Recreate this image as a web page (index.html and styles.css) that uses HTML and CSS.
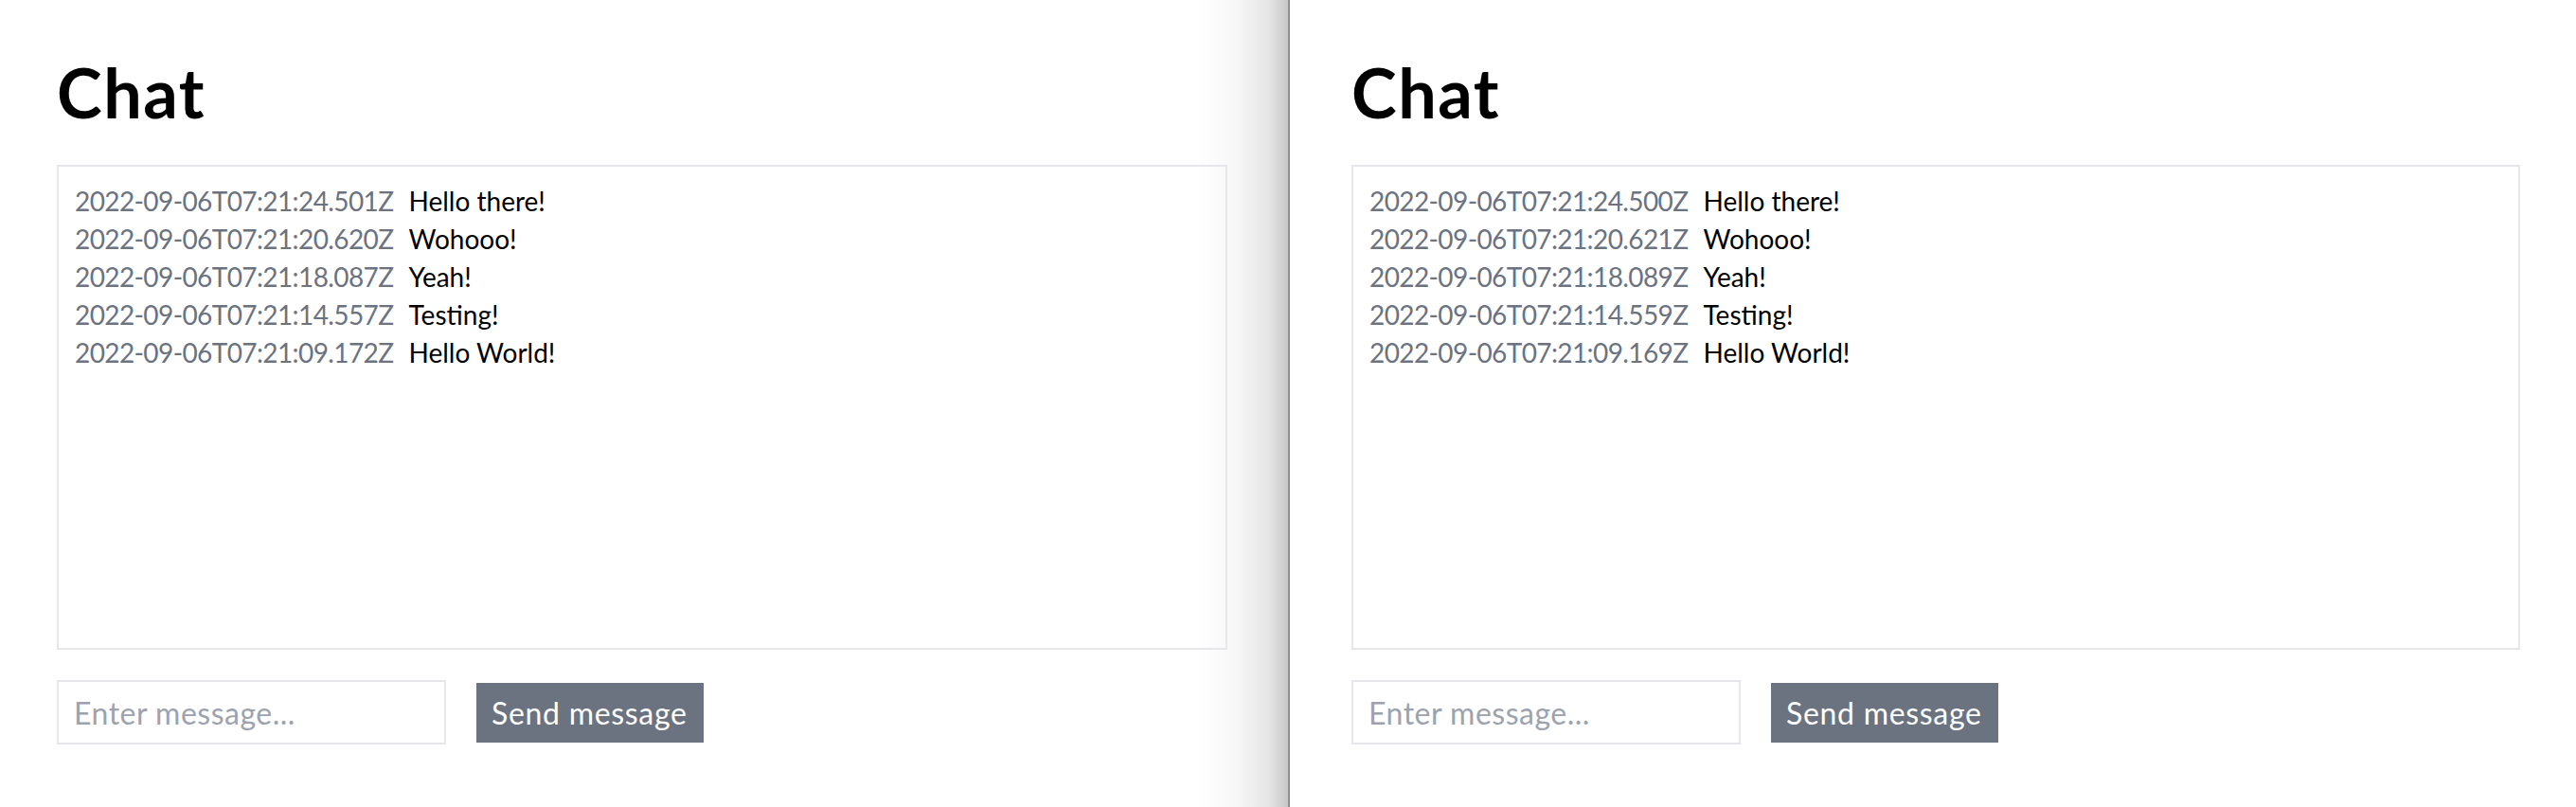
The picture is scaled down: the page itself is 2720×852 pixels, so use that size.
FILE: index.html
```html
<!DOCTYPE html>
<html lang="en">
<head>
<meta charset="utf-8">
<title>Chat</title>
<link rel="stylesheet" href="styles.css">
</head>
<body>
<div class="screen">
  <section class="pane pane-left">
    <h1 class="title">Chat</h1>
    <div class="messages">
      <div class="row"><span class="time">2022-09-06T07:21:24.501Z</span><span class="text">Hello there!</span></div>
      <div class="row"><span class="time">2022-09-06T07:21:20.620Z</span><span class="text">Wohooo!</span></div>
      <div class="row"><span class="time">2022-09-06T07:21:18.087Z</span><span class="text">Yeah!</span></div>
      <div class="row"><span class="time">2022-09-06T07:21:14.557Z</span><span class="text">Testing!</span></div>
      <div class="row"><span class="time">2022-09-06T07:21:09.172Z</span><span class="text">Hello World!</span></div>
    </div>
    <form class="composer">
      <input class="field" type="text" placeholder="Enter message...">
      <button class="send" type="button">Send message</button>
    </form>
  </section>
  <div class="divider"></div>
  <section class="pane pane-right">
    <h1 class="title">Chat</h1>
    <div class="messages">
      <div class="row"><span class="time">2022-09-06T07:21:24.500Z</span><span class="text">Hello there!</span></div>
      <div class="row"><span class="time">2022-09-06T07:21:20.621Z</span><span class="text">Wohooo!</span></div>
      <div class="row"><span class="time">2022-09-06T07:21:18.089Z</span><span class="text">Yeah!</span></div>
      <div class="row"><span class="time">2022-09-06T07:21:14.559Z</span><span class="text">Testing!</span></div>
      <div class="row"><span class="time">2022-09-06T07:21:09.169Z</span><span class="text">Hello World!</span></div>
    </div>
    <form class="composer">
      <input class="field" type="text" placeholder="Enter message...">
      <button class="send" type="button">Send message</button>
    </form>
  </section>
</div>
</body>
</html>
```

FILE: styles.css
```css
* { box-sizing: border-box; }

html, body {
  margin: 0;
  padding: 0;
  background: #ffffff;
}

body {
  font-family: Lato, "Noto Sans", sans-serif;
  color: #000000;
}

.screen {
  display: flex;
  width: 2720px;
  height: 852px;
  overflow: hidden;
}

.pane {
  display: flex;
  flex-direction: column;
  padding-top: 57px;
}

.pane-left {
  width: 1360px;
  flex: none;
  padding-left: 60px;
  padding-right: 64px;
  background: linear-gradient(to right,
    rgba(0,0,0,0) calc(100% - 100px),
    rgba(0,0,0,0.03) calc(100% - 55px),
    rgba(0,0,0,0.10) calc(100% - 20px),
    rgba(0,0,0,0.22) 100%);
}

.divider {
  width: 2px;
  flex: none;
  background: #8e8e8e;
}

.pane-right {
  flex: 1;
  padding-left: 65px;
  padding-right: 59px;
}

.title {
  margin: 0 0 37px;
  font-size: 72px;
  line-height: 80px;
  font-weight: 700;
  letter-spacing: 1.5px;
}

.messages {
  height: 512px;
  border: 2px solid #e5e7eb;
  padding: 16px 16px 16px 17px;
}

.row {
  font-size: 28px;
  line-height: 40px;
  white-space: nowrap;
}

.time {
  color: #6b7280;
  margin-right: 16px;
  letter-spacing: -0.6px;
}

.text {
  color: #000000;
}

.composer {
  display: flex;
  align-items: center;
  gap: 32px;
  margin-top: 32px;
}

.field {
  width: 411px;
  height: 68px;
  border: 2px solid #e5e7eb;
  padding: 0 16px;
  font-family: Lato, "Noto Sans", sans-serif;
  font-size: 32px;
  letter-spacing: 0.5px;
  color: #000;
  background: #fff;
  outline: none;
}

.field::placeholder {
  color: #9ca3af;
}

.send {
  width: 240px;
  height: 63px;
  border: none;
  padding: 0 16px;
  background: #6b7280;
  color: #ffffff;
  font-family: Lato, "Noto Sans", sans-serif;
  font-size: 32px;
  letter-spacing: 0.7px;
  text-align: left;
}
```
